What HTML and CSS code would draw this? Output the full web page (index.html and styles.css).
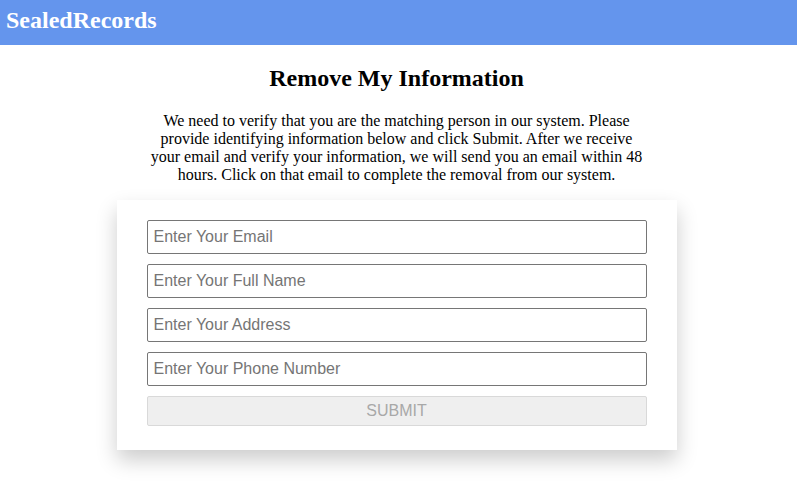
FILE: index.html
```html
<!DOCTYPE html>
<html>
<head>
<meta charset="utf-8">
<link rel="stylesheet" href="styles.css">
</head>
<body>
<header class="topbar"><span class="brand">SealedRecords</span></header>
<main class="content">
  <h1 class="title">Remove My Information</h1>
  <p class="intro">We need to verify that you are the matching person in our system. Please provide identifying information below and click Submit. After we receive your email and verify your information, we will send you an email within 48 hours. Click on that email to complete the removal from our system.</p>
  <form class="card">
    <input class="field" type="email" placeholder="Enter Your Email">
    <input class="field" type="text" placeholder="Enter Your Full Name">
    <input class="field" type="text" placeholder="Enter Your Address">
    <input class="field" type="text" placeholder="Enter Your Phone Number">
    <button class="submit" type="button" disabled>SUBMIT</button>
  </form>
</main>
</body>
</html>
```
FILE: styles.css
```css
html, body {
  margin: 0;
  padding: 0;
  background: #ffffff;
  font-family: "Liberation Serif", "Times New Roman", serif;
}
.topbar {
  height: 45px;
  background: #6495ed;
  display: flex;
  align-items: center;
  padding-left: 6px;
  box-sizing: border-box;
}
.brand {
  color: #ffffff;
  font-weight: bold;
  font-size: 24px;
  margin-top: -4px;
}
.content {
  display: flex;
  flex-direction: column;
  align-items: center;
  padding-right: 4px;
  padding-bottom: 40px;
}
.title {
  margin: 19px 0 0;
  font-size: 24px;
  line-height: 28px;
  font-weight: bold;
  color: #000;
}
.intro {
  width: 500px;
  margin: 20px 0 0;
  font-size: 16px;
  line-height: 18px;
  text-align: center;
  color: #000;
}
.card {
  margin-top: 16px;
  width: 560px;
  box-sizing: border-box;
  padding: 20px 30px 24px;
  background: #fff;
  box-shadow: 0 10px 20px rgba(0, 0, 0, 0.2);
  display: flex;
  flex-direction: column;
  gap: 10px;
}
.field {
  height: 34px;
  box-sizing: border-box;
  border: 1px solid #767676;
  border-radius: 2px;
  padding: 0 6px;
  font-family: "Liberation Sans", Arial, sans-serif;
  font-size: 16px;
  color: #000;
  margin: 0;
}
.field::placeholder {
  color: #757575;
}
.submit {
  height: 30px;
  box-sizing: border-box;
  background: #efefef;
  border: 1px solid #d9d9d9;
  border-radius: 2px;
  font-family: "Liberation Sans", Arial, sans-serif;
  font-size: 16px;
  color: #a8a8a8;
  margin: 0;
}
```
